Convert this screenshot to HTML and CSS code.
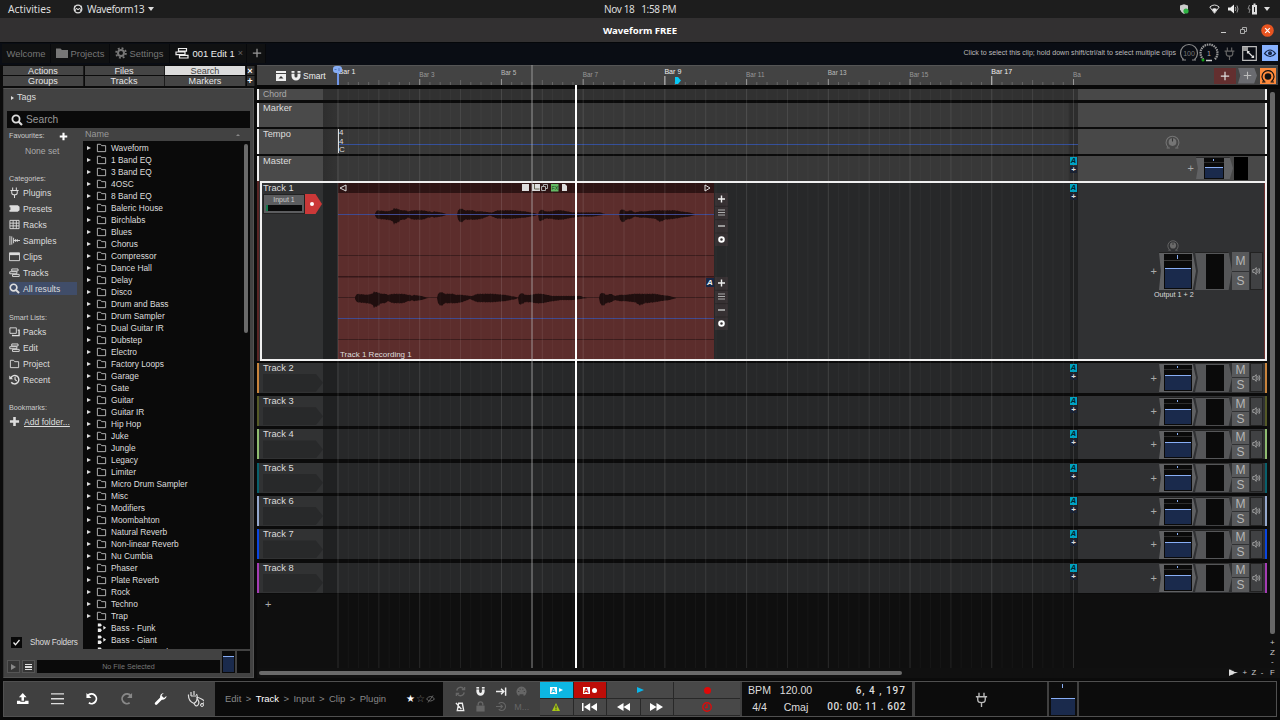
FILE: index.html
```
<!DOCTYPE html>
<html lang="en">
<head>
    <meta charset="UTF-8">
    <title>Waveform FREE</title>
    <link rel="stylesheet" href="styles.css">
</head>
<body>

<svg class="defs">
    <symbol id="i-folder" viewBox="0 0 12 12"><path d="M1.500 10.500V2.500h3.500l1.200 1.500h4.300v6.500z" fill="none" stroke="currentColor"/></symbol>
    <symbol id="i-folder-solid" viewBox="0 0 12 12"><path d="M0 1.500h4.500L6 3h6v8H0z" fill="currentColor"/></symbol>
    <symbol id="i-gear" viewBox="0 0 12 12"><circle cx="6" cy="6" r="3" fill="none" stroke="currentColor" stroke-width="2"/><circle cx="6" cy="6" r="4.900" fill="none" stroke="currentColor" stroke-width="1.800" stroke-dasharray="1.900 1.950"/></symbol>
    <symbol id="i-tracks" viewBox="0 0 14 12"><path d="M3.500 1.500h8v2.600h-8zM1 5h9v2.600H1zM4.500 8.400H13V11H4.500z" fill="none" stroke="currentColor" stroke-width="1.200"/></symbol>
    <symbol id="i-search" viewBox="0 0 12 12"><circle cx="5" cy="5" r="3.600" fill="none" stroke="currentColor" stroke-width="1.800"/><path d="M7.500 7.500l3.500 3.500" stroke="currentColor" stroke-width="2.200"/></symbol>
    <symbol id="i-plug" viewBox="0 0 12 12"><path d="M4 .5v3M8 .5v3M1.500 3.800h9M3 4v2.200q0 2.300 3 2.300t3-2.300V4M6 8.500V12" fill="none" stroke="currentColor" stroke-width="1.100"/></symbol>
    <symbol id="i-preset" viewBox="0 0 12 12"><path d="M.5 2.500H9.500L11.500 4v4l-2 1.500h-9V7.500h1v-3h-1z" fill="currentColor"/></symbol>
    <symbol id="i-rack" viewBox="0 0 12 12"><path d="M1 1.500h10v9H1zM1 4.500h10M1 7.500h10M4.500 1.500v9M8 1.500v9" fill="none" stroke="currentColor"/></symbol>
    <symbol id="i-sample" viewBox="0 0 12 12"><path d="M1 1v10M3 1.500v9M5 3v6M7 4.500v3M9 4.500v3M5 6h7" stroke="currentColor"/></symbol>
    <symbol id="i-clip" viewBox="0 0 12 12"><path d="M.5 2h11v8.500H.5z" fill="none" stroke="currentColor"/><path d="M.5 2h11v2.500H.5z" fill="currentColor"/></symbol>
    <symbol id="i-packs" viewBox="0 0 12 12"><path d="M1 2h7v6H1z" fill="none" stroke="currentColor"/><path d="M9.500 4.500H11v6H4V9.500" fill="none" stroke="currentColor" stroke-width="1.500"/></symbol>
    <symbol id="i-recent" viewBox="0 0 12 12"><path d="M2 4.200A4.600 4.600 0 1 1 2.500 9" fill="none" stroke="currentColor" stroke-width="1.600"/><path d="M.3 1.500v4.200h4.200zM6 3.200h1.200v2.600l1.600 1.400-.8.900-2-1.700z" fill="currentColor"/></symbol>
    <symbol id="i-plus" viewBox="0 0 12 12"><path d="M6 1v10M1 6h10" stroke="currentColor" stroke-width="2.800"/></symbol>
    <symbol id="i-thin-plus" viewBox="0 0 12 12"><path d="M6 1v10M1 6h10" stroke="currentColor" stroke-width="1.500"/></symbol>
    <symbol id="i-magnet" viewBox="0 0 12 12"><path d="M3 1v5a3 3 0 0 0 6 0V1" fill="none" stroke="currentColor" stroke-width="3"/><path d="M1 3.300h4M7 3.300h4" stroke="#333" stroke-width=".8"/></symbol>
    <symbol id="i-undo" viewBox="0 0 14 14"><path d="M3 3.800A5 5 0 1 1 4 11.200" fill="none" stroke="currentColor" stroke-width="1.900"/><path d="M1.500 1v5.200h5.200z" fill="currentColor"/></symbol>
    <symbol id="i-wrench" viewBox="0 0 14 14"><path d="M2.200 12l6-6" stroke="currentColor" stroke-width="2.800" stroke-linecap="round"/><path d="M13 3.800L10.800 6 8.300 5.600 8 3.200 10.200 1A4 4 0 0 0 6.500 6.200L8 7.800A4 4 0 0 0 13 3.800z" fill="currentColor"/></symbol>
    <symbol id="i-knob" viewBox="0 0 14 14"><circle cx="7" cy="7.500" r="3.600" fill="currentColor"/><path d="M3 12.500a6 6 0 1 1 8 0M1.500 13h3M9.500 13h3" fill="none" stroke="currentColor"/><path d="M7 4v3" stroke="#333"/></symbol>
    <symbol id="i-speaker" viewBox="0 0 12 12"><path d="M1 4.200h2l2.600-2.700v9L3 7.800H1z" fill="none" stroke="currentColor"/><path d="M7.500 3.500q1.500 2.500 0 5M9.300 2.200q2.600 3.800 0 7.600" fill="none" stroke="currentColor"/></symbol>
    <symbol id="i-midi" viewBox="0 0 12 12"><path d="M2 1.500h3l1.500 2L5 5H2zM2 7h3l1.500 2L5 11H2zM8 4l3 2.200L8 8.500z" fill="currentColor"/></symbol>
</svg>

<header class="sysbar">
    <span class="activities">Activities</span>
    <svg class="app-ico" viewBox="0 0 10 10"><circle cx="5" cy="5" r="3.800" fill="none" stroke="#ddd" stroke-width="1.300"/><path d="M2 7l1.500-3L5 6l1.500-2L8 7M1 2l2 1M9 2L7 3" fill="none" stroke="#ddd"/></svg>
    <span class="app">Waveform13</span>
    <i class="caret"></i>
    <span class="clock">Nov 18&nbsp;&nbsp; 1:58 PM</span>
    <div class="tray">
        <svg width="10" height="10" viewBox="0 0 10 10"><path d="M1 1.500L5 .3l4 1.200v4Q8 8.500 5 10 2 8.500 1 5.500z" fill="#ccc"/><circle cx="7" cy="7" r="2.600" fill="#2fb344"/></svg>
        <svg width="11" height="10" viewBox="0 0 11 10" class="wifi"><path d="M.8 3Q5.500-1 10.200 3L5.500 9.300z" fill="none" stroke="#ddd"/><path d="M3 5q2.500-1.500 5 0L5.500 9z" fill="#eee"/></svg>
        <svg width="11" height="10" viewBox="0 0 11 10"><path d="M0 3.500h2.500L6 .5v9L2.500 6.500H0z" fill="#eee"/><path d="M7.300 3q1.200 2 0 4M9 1.500q2 3.500 0 7" fill="none" stroke="#999"/></svg>
        <svg width="11" height="12" viewBox="0 0 11 12"><path d="M5 2h5v9.500H5zM6.500.5h2V2h-2z" fill="#ddd"/><path d="M7.500 4v5" stroke="#222"/><path d="M2.500 2L1 6h2L2 10" fill="none" stroke="#888"/></svg>
        <i class="caret"></i>
    </div>
</header>

<header class="titlebar">
    <b>Waveform FREE</b>
    <div class="win-btns">
        <i class="min"></i>
        <svg width="7" height="7" viewBox="0 0 7 7"><path d="M.5 2.500h4v4h-4zM2.500 2.500v-2h4v4h-2" fill="none" stroke="#aaa"/></svg>
        <svg width="13" height="13" viewBox="0 0 13 13"><circle cx="6.500" cy="6.500" r="6.300" fill="#e95420"/><path d="M4.200 4.200l4.600 4.600M8.800 4.200L4.200 8.800" stroke="#fff" stroke-width="1.200"/></svg>
    </div>
</header>

<nav class="tabs">
    <div class="tab t-welcome">Welcome</div>
    <div class="tab t-projects"><svg width="12" height="12"><use href="#i-folder-solid"/></svg>Projects</div>
    <div class="tab t-settings"><svg width="12" height="12"><use href="#i-gear"/></svg>Settings</div>
    <div class="tab t-edit active"><svg width="14" height="12"><use href="#i-tracks"/></svg>001 Edit 1<small>×</small></div>
    <div class="tab t-new"><svg width="10" height="10"><use href="#i-thin-plus"/></svg></div>
    <div class="hint">Click to select this clip; hold down shift/ctrl/alt to select multiple clips</div>
    <div class="dials">
        <svg width="20" height="20" viewBox="0 0 20 20"><path d="M4.500 16.500a8.500 8.500 0 1 1 11 0M3 17h4M13 17h4" fill="none" stroke="#8a8a8a" stroke-width="1.200"/><text x="10" y="12.500" class="dial-txt">100</text></svg>
        <svg width="20" height="20" viewBox="0 0 20 20"><path d="M4.500 16.500a8.500 8.500 0 1 1 11 0" fill="none" stroke="#9a9a9a" stroke-width="2.200" stroke-dasharray="1.500 .8"/><path d="M7 17.500h6" stroke="#ccc" stroke-width="1.500"/><circle cx="4" cy="17" r="1.500" fill="#12a012"/><text x="10" y="12.500" class="dial-txt one">1</text></svg>
        <svg class="plug" width="13" height="13"><use href="#i-plug"/></svg>
        <svg width="15" height="15" viewBox="0 0 15 15"><path d="M.7.7h13.600v13.600H.7z" fill="none" stroke="#bbb" stroke-width="1.200"/><path d="M1 1h5v4H1z" fill="#999"/><path d="M5.500 5.500l6 6M7.500 5.500h-2v2M9.500 11.500h2v-2" stroke="#ddd" stroke-width="1.200" fill="none"/></svg>
        <svg class="eye" width="16" height="16" viewBox="0 0 16 16"><path d="M2.500 8.500q5.500-7 11 0-5.500 6-11 0z" fill="none" stroke="#182848" stroke-width="1.200"/><circle cx="8" cy="8.200" r="2" fill="#182848"/></svg>
    </div>
</nav>

<main class="main">
    <aside class="browser">
        <div class="panel-tabs">
            <span>Actions</span><span>Files</span><span class="on">Search</span><span class="mini">×</span>
            <span>Groups</span><span>Tracks</span><span>Markers</span><span class="mini">+</span>
        </div>
        <div class="panel">
            <div class="tags"><i class="tri"></i>Tags</div>
            <div class="search"><svg width="12" height="12"><use href="#i-search"/></svg>Search</div>
            <div class="split">
                <div class="side">
                    <h4>Favourites: <svg width="9" height="9"><use href="#i-plus"/></svg></h4>
                    <p class="none">None set</p>
                    <h4 class="cat">Categories:</h4>
                    <ul>
                        <li><svg><use href="#i-plug"/></svg>Plugins</li>
                        <li><svg><use href="#i-preset"/></svg>Presets</li>
                        <li><svg><use href="#i-rack"/></svg>Racks</li>
                        <li><svg><use href="#i-sample"/></svg>Samples</li>
                        <li><svg><use href="#i-clip"/></svg>Clips</li>
                        <li><svg><use href="#i-tracks"/></svg>Tracks</li>
                        <li class="sel"><svg><use href="#i-search"/></svg>All results</li>
                    </ul>
                    <h4 class="smart">Smart Lists:</h4>
                    <ul>
                        <li><svg><use href="#i-packs"/></svg>Packs</li>
                        <li><svg><use href="#i-tracks"/></svg>Edit</li>
                        <li><svg><use href="#i-folder"/></svg>Project</li>
                        <li><svg><use href="#i-recent"/></svg>Recent</li>
                    </ul>
                    <h4 class="book">Bookmarks:</h4>
                    <ul><li class="add"><svg><use href="#i-plus"/></svg><u>Add folder...</u></li></ul>
                    <div class="show"><svg width="11" height="11" viewBox="0 0 11 11"><path d="M0 0h11v11H0z" fill="#080808"/><path d="M2.500 5.500l2 2.300 4-4.800" fill="none" stroke="#eee" stroke-width="1.300"/></svg>Show Folders</div>
                </div>
                <div class="results">
                    <div class="res-head">Name<i></i></div>
                    <div class="res-list" id="list"></div>
                    <div class="thumb"></div>
                </div>
            </div>
            <div class="preview">
                <span class="pbtn"><i class="tri grey"></i></span>
                <span class="pbtn"><i class="burger"></i></span>
                <span class="nofile">No File Selected</span>
                <span class="pvol"><i></i></span>
                <span class="pmeter"></span>
            </div>
        </div>
    </aside>

    <section class="editor">
        <div class="ruler">
            <div class="ruler-left">
                <svg width="10" height="10" viewBox="0 0 10 10"><path d="M0 0h10v2H0zM0 3h10v7H0z" fill="#eee"/><path d="M2.500 7.500L5 5l2.500 2.500z" fill="#333"/></svg>
                <svg width="12" height="12"><use href="#i-magnet"/></svg>
                <span>Smart</span>
            </div>
            <svg id="ticks" class="ticks" width="743" height="20"></svg>
            <div class="ruler-right">
                <span class="r-add"><svg width="10" height="10"><use href="#i-thin-plus"/></svg></span>
                <span class="r-plug"><svg width="9" height="9"><use href="#i-thin-plus"/></svg></span>
                <span class="r-knob"><svg width="14" height="14" viewBox="0 0 14 14"><circle cx="7" cy="7.500" r="3.300" fill="#111"/><path d="M3.500 12.500a6 6 0 1 1 7 0M1 13h3.500M9.500 13H13" fill="none" stroke="#111" stroke-width="1.200"/></svg></span>
            </div>
        </div>

        <div class="arrange">
            <div class="rows" id="rows">
                <div class="row glob chord"><div class="name">Chord</div><div class="lane"></div><div class="strip"></div></div>
                <div class="row glob"><div class="name">Marker</div><div class="lane"></div><div class="strip"></div></div>
                <div class="row glob"><div class="name">Tempo</div><div class="lane tempo"><span>4<br>4<br>C</span></div><div class="strip"><svg class="tknob" width="15" height="15"><use href="#i-knob"/></svg></div></div>
                <div class="row glob master"><div class="name">Master</div><div class="lane"><b class="auto">A</b></div>
                    <div class="strip"><span class="plus">+</span><div class="vol"><div class="fader"><i></i></div></div><div class="mmeter"></div></div></div>
            </div>
            <div class="add-track">+</div>
            <svg id="grid" class="grid" width="755" height="583"></svg>
            <div class="cursor"></div>
            <div class="playhead"></div>
            <div class="vthumb"></div>
            <div class="vzoom">+<br>Z<br>-</div>
        </div>
        <div class="hbar"><div class="hthumb"></div><div class="hzoom"><svg width="9" height="7" viewBox="0 0 9 7"><path d="M0 0l1 1 1-.5 1 1.500L4 1.500l1 1.200L9 3.500 5 4.500 4 5.500 2 6 0 7z" fill="#ddd"/></svg><span>+</span><span>Z</span><span>-</span><span class="f">F</span></div></div>
    </section>
</main>

<footer class="transport">
    <div class="tools">
        <svg viewBox="0 0 14 14"><path d="M7 1l4 4.500H8.300V9H5.700V5.500H3z" fill="#fff"/><path d="M1 9h3.500v1.200h5V9H13v3.500H1z" fill="#fff"/></svg>
        <svg viewBox="0 0 14 14"><path d="M0 2h14M0 7h14M0 12h14" stroke="#ddd" stroke-width="1.300"/></svg>
        <svg><use href="#i-undo"/></svg>
        <svg class="redo"><use href="#i-undo"/></svg>
        <svg><use href="#i-wrench"/></svg>
        <svg class="doctor" viewBox="0 0 17 17"><path d="M4 1v4M7 0v4M1.500 3.500Q1 10 7 12.500M9.500 3Q12 9 7 12.500M4 5h5M7 12.500q2 4 4 1.500t-.5-6 4 0-.5 5" fill="none" stroke="#ddd" stroke-width="1.200"/><circle cx="15" cy="14" r="1.500" fill="none" stroke="#ddd"/></svg>
    </div>
    <div class="crumbs">
        <span>Edit</span><span>&gt;</span><b>Track</b><span>&gt;</span><span>Input</span><span>&gt;</span><span>Clip</span><span>&gt;</span><span>Plugin</span>
        <div class="stars"><em>★</em><span>☆</span><svg width="9" height="8" viewBox="0 0 9 8"><path d="M.5 4q4-5 8 0-4 4-8 0zM2 7.500L7 .5" fill="none" stroke="#666"/></svg></div>
    </div>
    <div class="toggles">
        <svg viewBox="0 0 12 12" class="dim"><path d="M2 5a4 4 0 0 1 7.500-1.500M10 7a4 4 0 0 1-7.500 1.500M10.500 1v3h-3M1.500 11V8h3" fill="none" stroke="currentColor" stroke-width="1.400"/></svg>
        <svg><use href="#i-magnet"/></svg>
        <svg viewBox="0 0 12 12"><path d="M0 6h8M5.500 3L8.500 6l-3 3M10.500 1.500v9" fill="none" stroke="currentColor" stroke-width="1.600"/></svg>
        <svg viewBox="0 0 12 12" class="dim"><path d="M3.500 11A5.500 5.500 0 1 1 8.500 11L8 9H4z" fill="currentColor"/><path d="M2.500 6h1M4 3.500h1M7 3.500h1M8.500 6h1" stroke="#333"/></svg>
        <svg viewBox="0 0 12 12"><path d="M2.500 10.500l1.500-8h4l1.500 8zM1 2l6 7" fill="none" stroke="currentColor" stroke-width="1.500"/></svg>
        <svg viewBox="0 0 12 12" class="dim"><path d="M1.500 5h9v6.500h-9z" fill="currentColor"/><path d="M3.500 5V3.500a2.500 2.500 0 0 1 5 0V5" fill="none" stroke="currentColor" stroke-width="1.500"/></svg>
        <svg viewBox="0 0 12 12" class="dim"><path d="M3 3a4.300 4.300 0 1 1 0 6M0 6h7M5 4l2 2-2 2" fill="none" stroke="currentColor" stroke-width="1.200"/></svg>
        <span class="dim">M...</span>
    </div>
    <div class="buttons">
        <span class="cyan"><b>A</b><i class="tri white"></i></span>
        <span class="red"><b>A</b><i class="dot"></i></span>
        <span class="w2"><i class="tri blue"></i></span>
        <span class="w2"><i class="dot rec"></i></span>
        <span><svg width="8" height="8" viewBox="0 0 8 8"><path d="M4 0l4 8H0z" fill="#a8c814"/><path d="M4 2.500v3M4 6.200v1" stroke="#333"/></svg></span>
        <span><svg width="15" height="8" viewBox="0 0 15 8"><path d="M0 0h1.500v8H0zM8.200 0v8L2 4zM15 0v8L8.800 4z" fill="#fff"/></svg></span>
        <span><svg width="13" height="8" viewBox="0 0 13 8"><path d="M6.500 0v8L0 4zM13 0v8L6.500 4z" fill="#fff"/></svg></span>
        <span><svg width="13" height="8" viewBox="0 0 13 8"><path d="M0 0l6.500 4L0 8zM6.500 0L13 4 6.500 8z" fill="#fff"/></svg></span>
        <span class="w2"><svg width="10" height="10" viewBox="0 0 10 10"><circle cx="5" cy="5" r="4.200" fill="none" stroke="#d80d0d" stroke-width="1.400"/><path d="M5 2v3.500H3" fill="none" stroke="#d80d0d" stroke-width="1.300"/></svg></span>
    </div>
    <div class="readout">
        <span>BPM</span><span>120.00</span><span class="time bars">6, 4 , 197</span>
        <span>4/4</span><span>Cmaj</span><span class="time">00: 00: 11 . 602</span>
    </div>
    <div class="slot s1"><svg width="15" height="15"><use href="#i-plug"/></svg></div>
    <div class="slot s2"><i></i></div>
    <div class="slot s3"></div>
</footer>

<script src="app.js"></script>
</body>
</html>
```
FILE: styles.css
```
* {
    box-sizing: border-box;
}

body {
    margin: 0;
    width: 1280px;
    height: 720px;
    overflow: hidden;
    background: #080808;
    color: #ddd;
    font-family: "Liberation Sans", Arial, sans-serif;
    font-size: 9px;
    display: flex;
    flex-direction: column;
}

svg {
    display: block;
    flex: none;
}

.defs {
    display: none;
}

/* desktop bars */
.sysbar {
    height: 18px;
    background: #1d1d1d;
    font: 10.3px/18px "Noto Sans", sans-serif;
    display: flex;
    align-items: center;
    padding: 0 10px 0 8px;
    flex: none;
}

.activities {
    width: 65px;
}

.app-ico {
    width: 10px;
    height: 10px;
    margin-right: 4px;
}

.app {
    width: 57px;
    letter-spacing: -.45px;
}

.caret {
    border: 3px solid transparent;
    border-top: 4px solid #ddd;
    border-bottom: 0;
    margin-left: 4px;
}

.clock {
    margin-left: 450px;
    font-size: 10px;
    letter-spacing: -.35px;
    white-space: nowrap;
}

.tray {
    margin-left: auto;
    display: flex;
    align-items: center;
    gap: 8px;
}

.tray .wifi {
    margin-left: 12px;
}

.tray .caret {
    margin-left: -2px;
}

.titlebar {
    height: 24px;
    background: #323031;
    display: flex;
    align-items: center;
    justify-content: center;
    position: relative;
    font-family: "Noto Sans", sans-serif;
    font-size: 9.6px;
    color: #fff;
    flex: none;
}

.win-btns {
    position: absolute;
    right: 6px;
    display: flex;
    align-items: center;
    gap: 14px;
}

.win-btns .min {
    width: 5px;
    height: 1px;
    background: #ccc;
    margin: 4px 0 0 0;
}

/* page tabs */
.tabs {
    height: 23px;
    background: #0a0d14;
    border-top: 1px solid #05070a;
    display: flex;
    align-items: center;
    padding: 0 2px 2px 2px;
    flex: none;
}

.tab {
    height: 19px;
    background: #101112;
    border-right: 1px solid #08090c;
    color: #777;
    font-size: 9.4px;
    display: flex;
    align-items: center;
    gap: 4px;
    padding-left: 4.5px;
}

.tab.active {
    color: #eee;
}

.t-welcome { width: 49px; }
.t-projects { width: 59px; gap: 3px; }
.t-settings { width: 60px; gap: 3px; }
.t-edit { width: 77px; }
.t-edit small { color: #666; font-size: 9px; margin-left: -1px; }
.t-new { width: 19px; color: #999; }

.hint {
    margin-left: auto;
    font-size: 7.1px;
    color: #bbb;
    white-space: nowrap;
}

.dials {
    display: flex;
    align-items: center;
    margin-left: 3px;
}

.dial-txt {
    font-size: 7px;
    fill: #777;
    text-anchor: middle;
}

.dial-txt.one {
    fill: #aaa;
}

.dials .plug {
    color: #666;
    margin: 0 6px 0 4px;
}

.dials .eye {
    background: #87b1ff;
    margin-left: 5px;
}

.main {
    height: 615px;
    display: flex;
    flex: none;
    background: #0b0b0b;
}

/* browser */
.browser {
    width: 251px;
    margin-left: 3px;
    height: 613px;
    display: flex;
    flex-direction: column;
}

.panel-tabs {
    display: grid;
    grid-template-columns: 81px 80px 81px 8px;
    grid-auto-rows: 9.5px;
    column-gap: 0.5px;
    row-gap: 1px;
    height: 20px;
    margin-bottom: 3px;
    padding-top: 0.5px;
}

.panel-tabs span {
    background: #454545;
    border-right: 1px solid #1c1c1c;
    text-align: center;
    line-height: 10px;
    font-size: 9.1px;
    color: #e6e6e6;
    overflow: hidden;
}

.panel-tabs .on {
    background: #dcdcdc;
    color: #444;
}

.panel-tabs .mini {
    font-weight: bold;
    color: #fff;
    background: #303030;
}

.panel {
    flex: 1;
    background: #424242;
    border: 1px solid #545454;
    border-left-color: #333;
    display: flex;
    flex-direction: column;
}

.tags {
    height: 22px;
    padding: 3px 0 0 7px;
    display: flex;
    gap: 4px;
    align-items: flex-start;
    line-height: 11px;
}

.tri {
    border: 2.5px solid transparent;
    border-left: 4px solid #ddd;
    border-right: 0;
    display: inline-block;
}

.tags .tri {
    margin-top: 4px;
    border-width: 2px 0 2px 3px;
    margin-right: -1px;
}

.search {
    height: 17px;
    margin: 0 3px;
    background: #0a0a0a;
    color: #999;
    font-size: 10.2px;
    display: flex;
    align-items: center;
    gap: 3px;
    padding-left: 4px;
}

.search svg {
    color: #ddd;
}

.split {
    flex: 1;
    display: flex;
    min-height: 0;
    padding-right: 3px;
}

.side {
    width: 79px;
    padding-left: 5px;
    display: flex;
    flex-direction: column;
}

.side h4 {
    margin: 0;
    font-weight: normal;
    font-size: 7.2px;
    line-height: 10px;
    padding-top: 3px;
    display: flex;
    align-items: center;
    color: #ccc;
    white-space: nowrap;
}

.side h4 svg {
    margin-left: 14px;
    color: #fff;
}

.none {
    margin: 4.5px 0 14px 16px;
    line-height: 11px;
    font-size: 8.6px;
    color: #aaa;
}

.side ul {
    list-style: none;
    margin: 1px 0 0;
    padding: 0;
}

.side li {
    height: 16px;
    display: flex;
    align-items: center;
    gap: 3px;
    width: 68px;
    font-size: 8.6px;
    white-space: nowrap;
}

.side li svg {
    width: 11px;
    height: 11px;
}

.side li.sel {
    background: linear-gradient(#424242 1px, #404d69 1px, #404d69 14px, #424242 14px);
}

.side li.add {
    gap: 4px;
}

.side h4.smart {
    padding-top: 16px;
}

.side h4.book {
    padding-top: 15px;
}

.side .show {
    margin-top: auto;
    margin-bottom: 2px;
    display: flex;
    gap: 8px;
    padding-left: 2px;
    align-items: center;
    font-size: 8.2px;
    letter-spacing: -.2px;
    white-space: nowrap;
}

.results {
    flex: 1;
    position: relative;
    display: flex;
    flex-direction: column;
    min-height: 0;
}

.res-head {
    height: 13px;
    font-size: 9px;
    line-height: 13px;
    color: #999;
    padding: 0 10px 0 2px;
    display: flex;
    justify-content: space-between;
    align-items: center;
}

.res-head i {
    border: 2px solid transparent;
    border-bottom: 2px solid #888;
    border-top: 0;
}

.res-list {
    height: 508px;
    overflow: hidden;
    background: #0a0a0a;
    padding-top: 0.5px;
}

.res-list div {
    height: 12px;
    display: flex;
    align-items: center;
    font-size: 8.35px;
    padding-left: 4px;
    white-space: nowrap;
}

.res-list svg {
    width: 11px;
    height: 11px;
    margin: 0 4px 0 5px;
    color: #bbb;
}

.res-list .file svg {
    margin-left: 9px;
    color: #eee;
}

.thumb {
    position: absolute;
    right: 2px;
    top: 16px;
    width: 4px;
    height: 189px;
    border-radius: 2px;
    background: #6a6a6a;
}

.preview {
    height: 27px;
    display: flex;
    align-items: flex-end;
    padding: 0 3px 4px 3px;
    gap: 2px;
}

.pbtn {
    width: 13px;
    height: 13px;
    background: #353535;
    border: 1px solid #555;
    display: flex;
    align-items: center;
    justify-content: center;
}

.tri.grey {
    border-width: 3px 0 3px 5px;
    border-left-color: #888;
}

.burger {
    width: 7px;
    height: 6px;
    background: linear-gradient(#ddd 1.5px, transparent 1.5px 2.5px, #ddd 2.5px 4px, transparent 4px 5px, #ddd 5px);
}

.nofile {
    flex: 1;
    height: 13px;
    background: #0a0a0a;
    color: #777;
    font-size: 7.2px;
    line-height: 13px;
    text-align: center;
}

.pvol, .pmeter {
    width: 13px;
    height: 22px;
    background: #0a0a0a;
}

.pvol {
    padding: 5px 1px 1px;
}

.pvol i {
    display: block;
    height: 16px;
    background: #1a2a4c;
    border-top: 1px solid #88aef5;
}

/* editor */
.editor {
    flex: 1;
    margin-left: 3px;
    display: flex;
    flex-direction: column;
}

.ruler {
    height: 20px;
    width: 1021px;
    background: #434343;
    border-top: 1px solid #555;
    display: flex;
}

.ruler-left {
    width: 80px;
    display: flex;
    align-items: center;
    gap: 4px;
    padding-left: 19px;
    font-size: 8.5px;
    color: #eee;
}

.ruler-left span {
    margin-left: -3px;
}

.ticks {
    overflow: visible;
}

.ticks text {
    font-size: 6.4px;
    fill: #999;
}

.ticks .mid {
    fill: #bbb;
}

.ticks .big {
    font-size: 7.1px;
    fill: #eee;
}

.ruler-right {
    margin-left: auto;
    display: flex;
    align-items: center;
    gap: 2px;
    padding-right: 2px;
}

.ruler-right span {
    height: 16px;
    display: flex;
    align-items: center;
    justify-content: center;
}

.r-add {
    width: 22px;
    background: #632f2f;
}

.r-plug {
    width: 19px;
    background: #6a6b70;
    color: #bbb;
    clip-path: polygon(0 0, 85% 0, 100% 50%, 85% 100%, 0 100%, 12% 50%);
}

.r-knob {
    width: 16px;
    background: #ff8a3c;
    margin-left: 1px;
}

.arrange {
    position: relative;
    height: 583px;
    background: #0f0f0f;
    border-top: 4px solid #080808;
}

.rows {
    width: 1010px;
    background: #0b0b0b;
    height: 505px;
}

.row {
    display: flex;
    height: 30px;
    margin-bottom: 3.33px;
    border-left: 2px solid var(--c);
    border-right: 2px solid var(--c);
    position: relative;
}

.glob {
    --c: #eee;
    height: 24.5px;
    margin-bottom: 2.3px;
}

.chord {
    height: 11px;
    margin-bottom: 2.5px;
}

.name {
    width: 64px;
    flex: none;
    padding-left: 4px;
    font-size: 9.3px;
    line-height: 11px;
    background: #313233;
    color: #ddd;
    white-space: nowrap;
}

.glob .name {
    background: #4a4a4a;
}

.chord .name {
    font-size: 8.7px;
    color: #aaa;
}

.name .pocket {
    height: 18px;
    background: #28292a;
    clip-path: polygon(0 0, 88% 0, 100% 50%, 88% 100%, 0 100%);
}

.lane {
    width: 755px;
    flex: none;
    background: linear-gradient(90deg, #202122 0, #202122 14px, #272829 14px, #272829 747px, #1f2021 747px);
    position: relative;
}

.glob .lane {
    background: linear-gradient(90deg, #2e2e2e 0, #333 14px, #383838 14px, #383838 745px, #2d2d2d 747px);
}

.chord .lane {
    background: #313131;
}

.tempo span {
    display: block;
    margin-left: 15px;
    border-left: 1px solid #ddd;
    height: 24px;
    font-size: 8px;
    line-height: 8.2px;
    width: 9px;
    position: relative;
    z-index: 1;
}

.tempo::after {
    content: "";
    position: absolute;
    left: 15px;
    right: 0;
    top: 15px;
    height: 1px;
    background: #35509a;
}

.auto {
    position: absolute;
    right: 1px;
    top: 1px;
    width: 7px;
    height: 8px;
    background: #00a3c4;
    color: #06222b;
    font: italic bold 7.5px/8px "Liberation Sans", sans-serif;
    text-align: center;
    z-index: 4;
}

.auto::after {
    content: "+";
    position: absolute;
    left: 0;
    top: 9px;
    width: 7px;
    height: 7px;
    font-style: normal;
    line-height: 7px;
    font-size: 8px;
    background: #1a2233;
    color: #ddd;
}

.strip {
    flex: 1;
    background: #303133;
    display: flex;
    align-items: center;
    justify-content: flex-end;
    padding-right: 2px;
}

.glob .strip {
    background: #484848;
}

.tknob {
    color: #757575;
    margin-right: 83px;
}

.plus {
    color: #aaa;
    font-size: 11px;
    margin-right: 2px;
}

.vol {
    width: 37px;
    height: 29px;
    background: #606163;
    clip-path: polygon(0 0, 91% 0, 100% 50%, 91% 100%, 0 100%, 5% 50%);
    padding: 1px 5px;
    border-top: 1px solid #222;
}

.fader {
    height: 100%;
    background: linear-gradient(#0a0a0a 4px, #2d2d2d 4px, #2d2d2d 5px, #0a0a0a 5px);
    display: flex;
    align-items: flex-end;
    padding: 1px;
    position: relative;
    width: 28px;
}

.fader::before {
    content: "";
    position: absolute;
    left: 13px;
    top: 1px;
    width: 1px;
    height: 2px;
    background: #88aef5;
}

.fader i {
    width: 100%;
    height: 62%;
    background: #1a2a4c;
    border-top: 1px solid #88aef5;
}

.master .vol {
    height: 22px;
    padding: 0 8px;
}

.master .fader {
    width: 20px;
}

.master .fader::before {
    left: 9px;
}

.master .strip {
    padding-right: 17px;
}

.mmeter {
    width: 14px;
    height: 23px;
    background: #000;
    margin-left: 1px;
}

.meter {
    width: 37px;
    height: 29px;
    background: #555658;
    border-top: 1px solid #222;
    margin-left: -1px;
    clip-path: polygon(0 0, 91% 0, 100% 50%, 91% 100%, 0 100%, 8% 50%);
    padding: 1px 8px 1px 11px;
}

.meter i {
    display: block;
    height: 100%;
    background: #0a0a0a;
}

.ms {
    width: 17px;
    height: 29px;
    display: grid;
    grid-template-rows: 1fr 1fr;
    gap: 1px;
    font-size: 12px;
    line-height: 12px;
    color: #b5b5b5;
    text-align: center;
    margin-right: 1px;
}

.ms span {
    background: #58595b;
    display: flex;
    align-items: center;
    justify-content: center;
}

.spk {
    width: 13px;
    height: 29px;
    border: 1px solid #222;
    background: #404143;
    color: #bbb;
    display: flex;
    align-items: center;
    justify-content: center;
}

.spk svg {
    width: 9px;
    height: 10px;
}

/* selected track */
.row.big {
    --c: #5a2424;
    height: 180px;
    margin: -1.9px 0 1.8px;
    border-right: 0;
}

.row.big::after {
    content: "";
    position: absolute;
    left: 1px;
    right: 0;
    top: 0;
    bottom: 0;
    border: 2px solid #f0f0f0;
    z-index: 4;
}

.big .name {
    padding-top: 2px;
}

.big .strip {
    padding-right: 1px;
    border-right: 3px solid #6b2e2e;
}

.big .vol, .big .meter, .big .ms, .big .spk {
    height: 38px;
}

.big .fader {
    background: linear-gradient(#0a0a0a 6px, #3a3a3a 6px, #3a3a3a 7px, #0a0a0a 7px);
}

.big .fader::before {
    height: 4px;
}

.big .auto {
    top: 3px;
}

.out {
    position: relative;
    display: flex;
    align-items: center;
}

.out .knob {
    position: absolute;
    left: 8px;
    top: -13px;
    color: #6a6a6a;
}

.out em {
    position: absolute;
    left: -5px;
    top: 38px;
    font-style: normal;
    font-size: 7.2px;
    white-space: nowrap;
}

.input {
    display: flex;
    width: 59px;
    height: 20px;
}

.input .box {
    width: 42px;
    background: #5c5d5f;
    border: 1px solid #222;
    font-size: 7px;
    text-align: center;
    line-height: 10px;
    color: #ccc;
}

.input .box i {
    display: block;
    height: 6px;
    margin: 0 2px;
    background: #0a0a0a;
    border-left: 2px solid #157a4d;
}

.input .arm {
    width: 17px;
    background: #cb3838;
    clip-path: polygon(0 0, 62% 0, 100% 50%, 62% 100%, 0 100%);
    display: flex;
    align-items: center;
    padding-left: 5px;
}

.arm i {
    width: 4px;
    height: 4px;
    border-radius: 50%;
    background: #fff;
}

.clip {
    margin: 2px 0 0 15px;
    width: 376px;
    height: 176px;
    background: #5c2d2c;
    position: relative;
}

.clip-name {
    position: absolute;
    left: 2px;
    bottom: 0;
    font-size: 8px;
    color: #ddd;
}

.clip-a {
    position: absolute;
    right: 0;
    top: 95px;
    width: 8px;
    height: 9px;
    background: #172644;
    font: italic bold 8px/9px "Liberation Sans", sans-serif;
    text-align: center;
    color: #eee;
}

.clip-btns {
    position: absolute;
    left: 391.5px;
    top: 12px;
    width: 13px;
    background: #363032;
    color: #ddd;
}

.clip-btns.second {
    top: 96px;
}

.grid {
    position: absolute;
    left: 66px;
    top: 0;
    z-index: 3;
}

.cursor, .playhead {
    position: absolute;
    left: 274px;
    top: -24px;
    height: 603px;
    width: 2px;
    background: rgba(190, 190, 190, .35);
    z-index: 5;
}

.playhead {
    left: 317.5px;
    top: -4px;
    height: 583px;
    background: #fff;
}

.add-track {
    padding: 4px 8px;
    font-size: 11px;
    line-height: 12px;
    color: #aaa;
}

.vthumb {
    position: absolute;
    left: 1013px;
    top: 3px;
    width: 5px;
    height: 542px;
    border-radius: 2px;
    background: #666;
}

.vzoom {
    position: absolute;
    left: 1013px;
    top: 549px;
    font-size: 8px;
    line-height: 9.5px;
    text-align: center;
    color: #ccc;
}

.hbar {
    height: 10px;
    display: flex;
    align-items: center;
    padding-left: 2px;
    background: #101010;
}

.hthumb {
    width: 643px;
    height: 4px;
    border-radius: 2px;
    background: #6a6a6a;
    margin-top: -1px;
}

.hzoom {
    margin: -2px 0 0 327px;
    display: flex;
    gap: 4.5px;
    align-items: center;
    font-size: 7.8px;
    color: #ccc;
}

.hzoom .f {
    margin-left: 2px;
}

/* transport */
.transport {
    margin: 1px 3px 0;
    height: 36px;
    background: #404040;
    border: 1px solid #505050;
    display: flex;
    flex: none;
}

.tools {
    width: 211px;
    display: flex;
    align-items: center;
    gap: 21px;
    padding-left: 12px;
}

.tools svg {
    width: 13.5px;
    height: 13.5px;
    color: #fff;
}

.tools .redo {
    transform: scaleX(-1);
    color: #888;
}

.tools .doctor {
    width: 17px;
    height: 17px;
    margin-left: -2px;
}

.crumbs {
    width: 228px;
    background: #0b0b0b;
    display: flex;
    align-items: center;
    gap: 4.4px;
    padding-left: 10px;
    padding-bottom: 1px;
    font-size: 9.5px;
    color: #888;
}

.crumbs b {
    font-weight: normal;
    color: #fff;
}

.stars {
    margin-left: auto;
    margin-right: 8px;
    display: flex;
    align-items: center;
    font: 10px/10px "DejaVu Sans", sans-serif;
    gap: 1px;
}

.stars em {
    font-style: normal;
    color: #fff;
}

.stars span {
    color: #777;
}

.toggles {
    width: 97px;
    display: grid;
    grid-template-columns: repeat(4, 20.5px);
    grid-template-rows: 15px 15px;
    padding: 2px 0 0 7px;
    align-items: center;
    justify-items: center;
    color: #eee;
}

.toggles svg {
    width: 11px;
    height: 11px;
}

.toggles .dim {
    color: #666;
}

.buttons {
    width: 200px;
    display: grid;
    grid-template-columns: repeat(6, 1fr);
    grid-template-rows: 16px 16px;
    gap: 1px;
    background: #282828;
}

.buttons span {
    background: #484848;
    display: flex;
    align-items: center;
    justify-content: center;
}

.buttons .w2 {
    grid-column: span 2;
}

.buttons b {
    width: 7px;
    height: 7px;
    background: #fff;
    font-size: 7px;
    line-height: 7px;
    text-align: center;
    margin-right: 2px;
}

.buttons .cyan {
    background: #0db7e2;
    color: #0db7e2;
}

.buttons .red {
    background: #bd0d08;
    color: #bd0d08;
}

.tri.white {
    border-left-color: #fff;
}

.tri.blue {
    border-width: 3.5px 0 3.5px 7px;
    border-left-color: #08b7ec;
}

.dot {
    width: 5px;
    height: 5px;
    border-radius: 50%;
    background: #fff;
}

.dot.rec {
    width: 7px;
    height: 7px;
    background: #e00808;
}

.readout {
    width: 170px;
    margin-left: 2px;
    background: #0c0c0c;
    display: grid;
    grid-template-columns: 35px 38px 1fr;
    grid-template-rows: 16px 17px;
    align-items: center;
    justify-items: center;
    font-size: 10.6px;
    color: #ddd;
}

.time {
    justify-self: end;
    padding-right: 6px;
    font-family: Roboto, sans-serif;
    font-weight: 500;
    font-size: 10px;
    letter-spacing: .6px;
    white-space: pre;
}

.time.bars {
    letter-spacing: 1px;
}

.slot {
    background: #0c0c0c;
    margin-left: 2px;
}

.s1 {
    width: 132px;
    margin-left: 3px;
    display: flex;
    align-items: center;
    justify-content: center;
    color: #bbb;
}

.s2 {
    width: 28px;
    padding: 16px 2px 1px;
    background: linear-gradient(90deg, transparent 13px, #88aef5 13px, #88aef5 14px, transparent 14px) 0 2px / 28px 4px no-repeat #0c0c0c;
}

.s2 i {
    display: block;
    height: 17px;
    background: #1a2a4c;
    border-top: 1px solid #88aef5;
}

.s3 {
    flex: 1;
}
```
FILE: app.js
```
const folders = ['Waveform', '1 Band EQ', '3 Band EQ', '4OSC', '8 Band EQ', 'Baleric House', 'Birchlabs', 'Blues',
    'Chorus', 'Compressor', 'Dance Hall', 'Delay', 'Disco', 'Drum and Bass', 'Drum Sampler', 'Dual Guitar IR',
    'Dubstep', 'Electro', 'Factory Loops', 'Garage', 'Gate', 'Guitar', 'Guitar IR', 'Hip Hop', 'Juke', 'Jungle',
    'Legacy', 'Limiter', 'Micro Drum Sampler', 'Misc', 'Modifiers', 'Moombahton', 'Natural Reverb',
    'Non-linear Reverb', 'Nu Cumbia', 'Phaser', 'Plate Reverb', 'Rock', 'Techno', 'Trap'];
const files = ['Bass - Funk', 'Bass - Giant', 'Bass - Sine Sub'];

document.getElementById('list').innerHTML =
    folders.map(f => `<div><i class="tri"></i><svg><use href="#i-folder"/></svg>${f}</div>`).join('') +
    files.map(f => `<div class="file"><svg><use href="#i-midi"/></svg>${f}</div>`).join('');

// ruler + grid
const BAR = 40.86;
let ticks = '';
let lines = '';
for (let i = 0; i <= 72; i++) {
    const x = i * BAR / 4;
    const bar = i / 4 + 1;
    const isBar = i % 4 === 0;
    const odd = i % 8 === 0;
    const big = i % 32 === 0;
    const h = big ? 9 : odd ? 6 : isBar ? 5 : 3;
    ticks += `<rect x="${x + 0.5}" y="${19 - h}" width="1" height="${h}" fill="${big ? '#ccc' : odd ? '#999' : '#666'}"/>`;
    if (odd) {
        const cls = big ? 'big' : bar === 5 || bar === 13 ? 'mid' : '';
        const label = bar === 19 ? 'Ba' : 'Bar ' + bar;
        ticks += `<text x="${x + 0.5 + (i === 0 ? 1 : 0)}" y="${big ? 7.5 : cls ? 9 : 10.5}" class="${cls}">${label}</text>`;
    }
    lines += `<rect x="${x + 14.5}" y="0" width="1" height="579" fill="#fff" opacity="${odd ? 0.12 : isBar ? 0.09 : 0.035}"/>`;
}
// loop-in marker and the end marker
ticks += '<rect x="0" y="4" width="2" height="15" fill="#6f95e8"/><rect x="-4" y="0" width="9" height="7" rx="3" fill="#88aef5"/>';
ticks += '<path d="M-2.500 3.500h2M2 2v3" stroke="#5577bb" fill="none"/>';
ticks += '<path d="M338 11h3l3 3.500-3 3.500h-3z" fill="#08c8f5"/>';
document.getElementById('ticks').innerHTML = ticks;
document.getElementById('grid').innerHTML = lines;

// waveform envelope: x, up, down
const env = [[0, 1, 1], [2, 4, 4], [12, 3, 5], [17, 4, 6], [19, 6, 9], [24, 5, 7], [26, 4, 5], [30, 4, 5], [33, 3, 3],
    [38, 4, 5], [48, 4, 5], [53, 3, 3], [55, 3, 3], [57, 2, 2], [59, 3, 3], [66, 2, 2], [73, 0, 0], [82, 0, 0],
    [83, 4, 5], [86, 6, 8], [90, 4, 5], [98, 4, 5], [101, 3, 5], [107, 3, 4], [115, 2, 1], [117, 2, 2], [123, 4, 4],
    [138, 4, 4], [150, 3, 3], [161, 1, 1], [163, 0, 0], [164, 3, 6], [167, 5, 6], [170, 3, 4], [176, 3, 4],
    [181, 4, 5], [187, 4, 5], [192, 3, 4], [198, 2, 3], [205, 2, 2], [218, 2, 2], [225, 2, 1], [232, 0, 0],
    [244, 0, 0], [245, 4, 5], [248, 5, 8], [251, 3, 5], [256, 4, 4], [260, 2, 2], [265, 3, 3], [270, 3, 3],
    [280, 4, 4], [285, 4, 7], [290, 4, 5], [300, 4, 4], [306, 3, 3], [314, 2, 2], [322, 0, 0]];
const pts = [];
for (let k = 0; k < env.length - 1; k++) {
    const a = env[k], b = env[k + 1];
    for (let x = a[0]; x < b[0]; x++) {
        const t = (x - a[0]) / (b[0] - a[0]);
        const rough = 0.88 + 0.25 * Math.abs(Math.sin(x * 1.9));
        pts.push([x, (a[1] + (b[1] - a[1]) * t) * rough, (a[2] + (b[2] - a[2]) * t) * rough]);
    }
}
const wave = (x0, y0) => 'M' +
    pts.map(p => `${x0 + p[0]} ${(y0 - p[1]).toFixed(1)}`).join('L') + 'L' +
    pts.slice().reverse().map(p => `${x0 + p[0]} ${(y0 + p[2]).toFixed(1)}`).join('L') + 'Z';

const clipBtns = `<svg viewBox="0 0 13 53" width="13" height="53"><path d="M6.500 2.500v7M3 6h7" stroke="#eee" stroke-width="1.400"/>
    <path d="M3 17h7M3 19.500h7M3 22h7" stroke="#bbb" stroke-width=".9"/><path d="M3 33h7" stroke="#bbb" stroke-width="1.500"/>
    <circle cx="6.500" cy="46.500" r="2.300" fill="none" stroke="#fff" stroke-width="2"/>
    <path d="M0 13.300h13M0 26.600h13M0 40h13" stroke="#2b2627"/></svg>`;

const clip = `<div class="clip">
    <svg width="376" height="176" viewBox="0 0 376 176">
        <rect width="376" height="10" fill="#2e1414"/>
        <path d="M0 31.500h376M0 72.500h376M0 114.500h376M0 156.500h376" stroke="#3c1d1d"/>
        <rect y="93" width="376" height="1.500" fill="#351718"/>
        <path d="${wave(37, 31.5)}${wave(17, 115)}" fill="#1f0e0e"/>
        <path d="M0 31.500h376M0 135.500h376" stroke="#404a90" stroke-width="1.200"/>
        <path d="M8 2v6L2 5zM367 2v6l5-3z" fill="none" stroke="#ddd"/>
        <path d="M184 1h7v7h-7zM194 1h8v7h-8zM224 1h3l2 2v5h-5z" fill="#ddd"/>
        <path d="M196.500 1v5h5" fill="none" stroke="#665"/>
        <path d="M203.500 3.500h4v4h-4zM205.500 3v-1.500h4v4H208" fill="none" stroke="#aaa"/>
        <rect x="213" y="1" width="7.500" height="7.500" fill="#64b964"/><text x="213.500" y="7.200" font-size="5.500" fill="#143c14">FX</text>
    </svg>
    <span class="clip-name">Track 1 Recording 1</span><span class="clip-a">A</span></div>`;

const strip = `<div class="vol"><div class="fader"><i></i></div></div><div class="meter"><i></i></div>
    <div class="ms"><span>M</span><span>S</span></div><div class="spk"><svg><use href="#i-speaker"/></svg></div>`;

let html = `<div class="row big">
    <div class="name">Track 1<div class="input"><div class="box">Input 1<i></i></div><div class="arm"><i></i></div></div></div>
    <div class="lane">${clip}<div class="clip-btns">${clipBtns}</div><div class="clip-btns second">${clipBtns}</div><b class="auto">A</b></div>
    <div class="strip"><span class="plus">+</span><div class="out">
        <svg class="knob" width="12" height="12"><use href="#i-knob"/></svg>${strip}<em>Output 1 + 2</em></div></div></div>`;

const colours = ['#c9843c', '#555a26', '#8fbc6f', '#08606c', '#93a7cc', '#0b46e0', '#a43cb4'];
colours.forEach((c, i) => {
    html += `<div class="row" style="--c: ${c}"><div class="name">Track ${i + 2}<div class="pocket"></div></div>
        <div class="lane"><b class="auto">A</b></div><div class="strip"><span class="plus">+</span>${strip}</div></div>`;
});
document.getElementById('rows').insertAdjacentHTML('beforeend', html);
```
